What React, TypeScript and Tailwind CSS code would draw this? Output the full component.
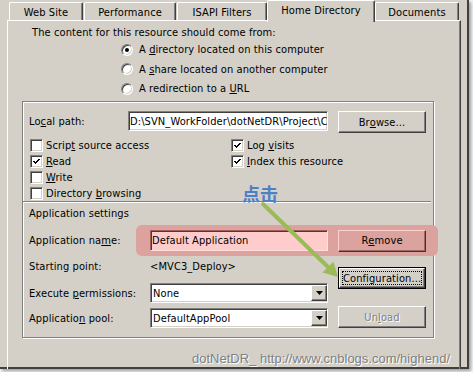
import type { ReactNode } from 'react';

const sunken =
  'border border-t-[#808080] border-l-[#808080] border-r-white border-b-white shadow-[inset_1px_1px_0_#404040,inset_-1px_-1px_0_#d4d0c8]';
const raised =
  'border border-t-white border-l-white border-r-[#404040] border-b-[#404040] shadow-[inset_-1px_-1px_0_#808080]';

function U({ children }: { children: ReactNode }) {
  return <span className="underline underline-offset-[1px] decoration-1">{children}</span>;
}

function Tab({ label, w, selected }: { label: string; w: string; selected?: boolean }) {
  return (
    <div
      className={`${w} ${
        selected ? 'h-[22px] mb-[-2px] relative z-10 pt-[3px]' : 'h-[18px] mt-[2px] pt-[3px]'
      } bg-[#d4d0c8] border-t border-l border-r border-t-white border-l-white border-r-[#404040] shadow-[inset_-1px_0_0_#808080] rounded-t-[2px] text-center shrink-0`}
    >
      {label}
    </div>
  );
}

function Radio({ checked, children }: { checked?: boolean; children: ReactNode }) {
  return (
    <div className="flex items-center h-[19.5px]">
      <div className={`w-[12px] h-[12px] rounded-full bg-white ${sunken} flex items-center justify-center`}>
        {checked && <div className="w-[4px] h-[4px] rounded-full bg-black" />}
      </div>
      <span className="ml-[6px]">{children}</span>
    </div>
  );
}

function Check({ checked, children }: { checked?: boolean; children: ReactNode }) {
  return (
    <div className="flex items-center h-[16px]">
      <div className={`w-[13px] h-[13px] bg-white ${sunken} flex items-center justify-center shrink-0`}>
        {checked && (
          <svg width="7" height="7" viewBox="0 0 7 7" shapeRendering="crispEdges">
            <polyline points="0.5,3 2.5,5 6.5,1" fill="none" stroke="#000" strokeWidth="2" />
          </svg>
        )}
      </div>
      <span className="ml-[3px]">{children}</span>
    </div>
  );
}

function Button({ children, className = '' }: { children: ReactNode; className?: string }) {
  return (
    <div className={`w-[88px] h-[22px] shrink-0 bg-[#d4d0c8] ${raised} flex items-center justify-center ${className}`}>
      {children}
    </div>
  );
}

function Select({ value }: { value: string }) {
  return (
    <div className={`w-[178px] h-[20px] shrink-0 bg-white ${sunken} flex items-center`}>
      <span className="flex-1 pl-[2px]">{value}</span>
      <div className={`w-[16px] h-[16px] bg-[#d4d0c8] ${raised} flex items-center justify-center`}>
        <svg width="7" height="4" viewBox="0 0 7 4">
          <polygon points="0,0 7,0 3.5,4" fill="#000" />
        </svg>
      </div>
    </div>
  );
}

export default function App() {
  return (
    <div className="w-[473px] h-[372px] bg-[#f4f4f4] overflow-hidden relative font-['DejaVu_Sans_Condensed','DejaVu_Sans',sans-serif] text-[11px] leading-[13px] text-black tracking-[0.1px]">
      <div className="w-[469px] h-[369px] bg-[#d4d0c8] border-r-2 border-b-2 border-[#404040] shadow-[2px_2px_3px_rgba(0,0,0,0.35)]">
        {/* tabs */}
        <div className="flex h-[20px] pl-[9px]">
          <Tab label="Web Site" w="w-[74px]" />
          <div className="w-[1px]" />
          <Tab label="Performance" w="w-[92px]" />
          <div className="w-[1px]" />
          <Tab label="ISAPI Filters" w="w-[90px]" />
          <Tab label="Home Directory" w="w-[108px]" selected />
          <Tab label="Documents" w="w-[84px]" />
        </div>

        {/* tab page */}
        <div className="ml-[7px] w-[454px] h-[349px] border-l border-t border-r border-l-white border-t-white border-r-[#404040] shadow-[inset_-1px_0_0_#808080]">
          <div className="pl-[24px] pt-[5px]">The content for this resource should come from:</div>
          <div className="pl-[113px] mt-[1px]">
            <Radio checked>
              A <U>d</U>irectory located on this computer
            </Radio>
            <Radio>
              A <U>s</U>hare located on another computer
            </Radio>
            <Radio>
              A redirection to a <U>U</U>RL
            </Radio>
          </div>

          {/* group box */}
          <div className="ml-[14px] mt-[2.5px] w-[412px] h-[237px] border border-[#808080] shadow-[inset_1px_1px_0_white,1px_1px_0_white]">
            <div className="flex items-start mt-[9px] pl-[6px]">
              <div className="w-[99px] h-[20px] shrink-0 flex items-center">
                Lo<U>c</U>al path:
              </div>
              <div className={`w-[200px] h-[20px] shrink-0 bg-white ${sunken} flex items-center pl-[1px] overflow-hidden whitespace-nowrap`}>
                {'D:\\SVN_WorkFolder\\dotNetDR\\Project\\C'}
              </div>
              <Button className="ml-[10px]">
                Br<U>o</U>wse...
              </Button>
            </div>

            <div className="grid grid-cols-[201px_1fr] mt-[4px] pl-[7px]">
              <Check>
                Scrip<U>t</U> source access
              </Check>
              <Check checked>
                Log <U>v</U>isits
              </Check>
              <Check checked>
                <U>R</U>ead
              </Check>
              <Check checked>
                <U>I</U>ndex this resource
              </Check>
              <Check>
                <U>W</U>rite
              </Check>
              <div />
              <Check>
                Directory <U>b</U>rowsing
              </Check>
              <div />
            </div>

            <div className="mt-0 w-[408px] h-[2px] border-t border-b border-t-[#808080] border-b-white" />

            <div className="pl-[6px] mt-[4px]">Application settings</div>

            <div className="flex items-center mt-[5px]">
              <div className="ml-[6px] w-[107px] shrink-0">
                Application na<U>m</U>e:
              </div>
              <div className="h-[31px] shrink-0 flex items-center pl-[14px] pr-[12px] bg-[#dca29d] rounded-[6px]">
                <div className="w-[178px] h-[21px] bg-[#ffcccc] border border-t-[#a06060] border-l-[#a06060] border-r-[#ffe0e0] border-b-[#ffe0e0] shadow-[inset_1px_1px_0_#603030] flex items-center pl-[1px]">
                  Default Application
                </div>
                <div className="ml-[10px] w-[88px] h-[22px] bg-[#dca29d] border border-t-[#ffd0d0] border-l-[#ffd0d0] border-r-[#5a2a28] border-b-[#5a2a28] shadow-[inset_-1px_-1px_0_#9a6a66] flex items-center justify-center">
                  R<U>e</U>move
                </div>
              </div>
            </div>

            <div className="flex">
              <div className="ml-[6px] w-[299px] shrink-0">
                <div className="h-[20px] flex items-center">
                  <span className="w-[121px] shrink-0">Starting point:</span>
                  <span>&lt;MVC3_Deploy&gt;</span>
                </div>
                <div className="h-[20px] mt-[7px] flex items-center">
                  <span className="w-[121px] shrink-0">
                    Execute <U>p</U>ermissions:
                  </span>
                  <Select value="None" />
                </div>
                <div className="h-[20px] mt-[5px] flex items-center">
                  <span className="w-[121px] shrink-0">
                    Applicatio<U>n</U> pool:
                  </span>
                  <Select value="DefaultAppPool" />
                </div>
              </div>
              <div className="ml-[10px] shrink-0">
                <div className="mt-[11px] w-[88px] h-[22px] border border-black">
                  <div className={`w-full h-full bg-[#d4d0c8] ${raised} flex p-[2px]`}>
                    <div className="flex-1 border border-dotted border-black flex items-center justify-center">
                      Configuration...
                    </div>
                  </div>
                </div>
                <Button className="mt-[17px] text-[#808080] [text-shadow:1px_1px_0_#fff]">
                  Un<U>l</U>oad
                </Button>
              </div>
            </div>
          </div>

          <div className="mt-[13px] pr-[10px] text-right font-['Liberation_Sans',sans-serif] text-[13px] leading-[15px] tracking-normal text-[#808080] [text-shadow:1px_1px_0_#fff]">
            dotNetDR_ http://www.cnblogs.com/highend/
          </div>
        </div>
      </div>

      {/* annotation */}
      <div className="absolute left-[242px] top-[184px] font-['Noto_Sans_CJK_SC',sans-serif] font-bold text-[18px] leading-[18px] text-[#4f7fc6]">
        点击
      </div>
      <svg className="absolute left-0 top-0 pointer-events-none" width="473" height="372" viewBox="0 0 473 372">
        <line x1="263" y1="204" x2="329" y2="268" stroke="#9bbb59" strokeWidth="4" strokeLinecap="round" />
        <polygon points="338,277 322.6,272.6 333.4,261.6" fill="#9bbb59" />
      </svg>
    </div>
  );
}
